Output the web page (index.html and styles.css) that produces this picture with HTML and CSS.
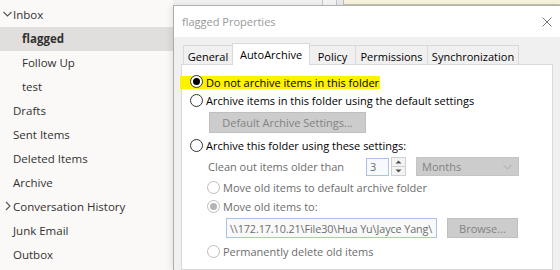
FILE: index.html
```html
<!DOCTYPE html>
<html>
<head>
<meta charset="utf-8">
<link rel="stylesheet" href="styles.css">
</head>
<body>
<div class="screen">
  <nav class="folders">
    <div class="row has-chev"><svg class="chev" width="11" height="8" viewBox="0 0 11 8"><polyline points="1.5,2 5.5,6 9.5,2" fill="none" stroke="#555" stroke-width="1.1"/></svg>Inbox</div>
    <div class="row sub selected">flagged</div>
    <div class="row sub">Follow Up</div>
    <div class="row sub">test</div>
    <div class="row">Drafts</div>
    <div class="row">Sent Items</div>
    <div class="row">Deleted Items</div>
    <div class="row">Archive</div>
    <div class="row has-chev"><svg class="chev" width="11" height="10" viewBox="0 0 11 10"><polyline points="4,1 8,5 4,9" fill="none" stroke="#555" stroke-width="1.1"/></svg>Conversation History</div>
    <div class="row">Junk Email</div>
    <div class="row">Outbox</div>
  </nav>
  <div class="main">
    <div class="strip">
      <div class="strip-grey"></div>
      <div class="strip-mid"></div>
      <div class="strip-mid2"></div>
      <div class="strip-yellow"></div>
    </div>
    <div class="dialog">
      <div class="titlebar">
        <span class="title">flagged Properties</span>
        <svg class="close" width="10" height="10" viewBox="0 0 10 10"><path d="M0.5 0.5L9.5 9.5M9.5 0.5L0.5 9.5" stroke="#7a7a7a" stroke-width="1"/></svg>
      </div>
      <div class="body">
        <div class="tabs">
          <div class="tab t-general">General</div>
          <div class="tab t-auto active">AutoArchive</div>
          <div class="tab t-policy">Policy</div>
          <div class="tab t-perm">Permissions</div>
          <div class="tab t-sync">Synchronization</div>
        </div>
        <div class="panel">
          <div class="opt r1"><span class="hl"><span class="radio checked"></span><span class="lbl">Do not archive items in this folder</span></span></div>
          <div class="opt r2"><span class="radio"></span><span class="lbl">Archive items in this folder using the default settings</span></div>
          <div class="btn btn-default">Default Archive Settings...</div>
          <div class="opt r3"><span class="radio"></span><span class="lbl">Archive this folder using these settings:</span></div>
          <div class="clean">
            <span class="clean-lbl">Clean out items older than</span>
            <span class="spin-input">3</span>
            <span class="spin-btns">
              <span class="spin-up"><svg width="7" height="4" viewBox="0 0 7 4"><polygon points="0.5,3.5 3.5,0.5 6.5,3.5" fill="#505050"/></svg></span>
              <span class="spin-down"><svg width="7" height="4" viewBox="0 0 7 4"><polygon points="0.5,0.5 3.5,3.5 6.5,0.5" fill="#505050"/></svg></span>
            </span>
            <span class="select">Months<svg class="sel-chev" width="9" height="6" viewBox="0 0 9 6"><polyline points="0.5,1 4.5,5 8.5,1" fill="none" stroke="#a8a8a8" stroke-width="1"/></svg></span>
          </div>
          <div class="opt sub-opt r4"><span class="radio dis"></span><span class="lbl dis-lbl">Move old items to default archive folder</span></div>
          <div class="opt sub-opt r5"><span class="radio dis checked"></span><span class="lbl dis-lbl">Move old items to:</span></div>
          <div class="path-row">
            <span class="path-input"><span class="path-text">\\172.17.10.21\File30\Hua Yu\Jayce Yang\</span></span>
            <span class="btn btn-browse">Browse...</span>
          </div>
          <div class="opt sub-opt r6"><span class="radio dis"></span><span class="lbl dis-lbl">Permanently delete old items</span></div>
        </div>
      </div>
    </div>
  </div>
</div>
</body>
</html>
```
FILE: styles.css
```css
* { box-sizing: border-box; margin: 0; padding: 0; }
html, body { width: 560px; height: 270px; overflow: hidden; }
body { font-family: "Open Sans", "Noto Sans", sans-serif; background: #faf9f8; }

.screen { display: flex; height: 270px; }

/* folder pane */
.folders { width: 173px; flex: none; background: #faf9f8; padding-top: 3px; font-size: 11.5px; color: #323130; }
.row { height: 24px; display: flex; align-items: center; padding-left: 13px; padding-bottom: 2px; white-space: nowrap; }
.row.has-chev { padding-left: 2px; }
.chev { flex: none; display: block; }
.row.sub { padding-left: 22px; }
.row.selected { background: #e1dfdd; font-weight: 700; }

/* right area */
.main { flex: 1; display: flex; flex-direction: column; min-width: 0; }
.strip { height: 5px; display: flex; flex: none; }
.strip-grey { width: 150px; background: #f1f1f1; border-right: 1px solid #c6c6c6; }
.strip-mid { width: 14px; background: #f4f4f4; border-right: 1px solid #c6c6c6; }
.strip-mid2 { width: 7px; background: #eaeaea; border-right: 1px solid #bcbcbc; }
.strip-yellow { flex: 1; background: #f6f2dc; border-bottom: 1px solid #c9c4ac; }

.dialog { flex: 1; display: flex; flex-direction: column; background: #f0f0f0; border-left: 1px solid #ababab; border-top: 1px solid #b0b0b0; box-shadow: -3px 0 6px rgba(0,0,0,0.07); min-height: 0; }
.titlebar { height: 31px; flex: none; background: #fff; display: flex; align-items: center; justify-content: space-between; padding: 0 8px 0 8px; }
.title { font-size: 11px; color: #999; }
.close { display: block; }

.body { flex: 1; display: flex; flex-direction: column; padding: 6px 7px 0 7px; font-size: 11px; color: #000; }

.tabs { height: 21px; flex: none; display: flex; align-items: flex-end; padding-left: 2px; }
.tab { height: 19px; border: 1px solid #d9d9d9; border-bottom: none; background: #f0f0f0; margin-right: -1px; display: flex; align-items: center; justify-content: center; padding-top: 2px; white-space: nowrap; }
.tab.active { height: 22px; margin-bottom: -1px; background: #fff; position: relative; z-index: 1; padding-top: 0; }
.t-general { width: 50px; }
.t-auto { width: 78px; }
.t-policy { width: 47px; }
.t-perm { width: 73px; }
.t-sync { width: 92px; }

.panel { flex: 1; background: #fff; border: 1px solid #d9d9d9; padding-left: 8px; }

.opt { display: flex; align-items: center; white-space: nowrap; }
.r1 { margin-top: 6px; height: 20px; }
.r2 { height: 19px; }
.r3 { margin-top: 2px; height: 20px; }
.r4 { margin-top: 2px; height: 19px; }
.r5 { height: 19px; }
.r6 { margin-top: 3px; height: 20px; }
.sub-opt { margin-left: 17px; }

.hl { display: flex; align-items: center; height: 13px; background: #fff200; margin-left: -10px; padding-left: 10px; padding-right: 1px; position: relative; top: 1px; }
.hl .radio { position: relative; top: -1px; }

.radio { width: 13px; height: 13px; flex: none; border: 1px solid #333; border-radius: 50%; background: #fff; display: flex; align-items: center; justify-content: center; }
.radio.checked::after { content: ""; width: 7px; height: 7px; border-radius: 50%; background: #000; }
.radio.dis { border-color: #bcbcbc; }
.radio.dis.checked::after { background: #b4b4b4; }
.lbl { margin-left: 3px; }
.dis-lbl { color: #6d6d6d; }

.btn { background: #cccccc; border: 1px solid #bfbfbf; color: #838383; display: flex; align-items: center; justify-content: center; white-space: nowrap; }
.btn-default { margin-left: 19px; margin-top: 2px; width: 157px; height: 21px; }

.clean { margin-top: 2px; height: 19px; display: flex; align-items: center; margin-left: 18px; white-space: nowrap; }
.clean-lbl { width: 158px; color: #6d6d6d; }
.spin-input { width: 23px; height: 18px; border: 1px solid #a9c3e6; background: #f7f9fc; color: #6d6d6d; padding-left: 3px; display: flex; align-items: center; }
.spin-btns { margin-left: 2px; width: 15px; height: 19px; display: flex; flex-direction: column; }
.spin-up, .spin-down { flex: 1; border: 1px solid #d0d0d0; background: #f3f3f3; display: flex; align-items: center; justify-content: center; }
.spin-down { border-top: none; }
.spin-up svg, .spin-down svg { display: block; }
.select { margin-left: 10px; width: 103px; height: 19px; background: #cccccc; border: 1px solid #c4c4c4; color: #838383; display: flex; align-items: center; justify-content: space-between; padding: 0 6px 0 5px; }
.sel-chev { display: block; }

.path-row { margin-top: 2px; height: 20px; display: flex; margin-left: 36px; }
.path-input { width: 211px; height: 20px; border: 1px solid #a9c3e6; background: #f9f9f9; color: #6d6d6d; padding-left: 3px; white-space: nowrap; overflow: hidden; display: flex; align-items: center; }
.path-text { font-size: 10.8px; letter-spacing: -0.1px; }
.btn-browse { margin-left: 10px; width: 71px; height: 20px; }
```
